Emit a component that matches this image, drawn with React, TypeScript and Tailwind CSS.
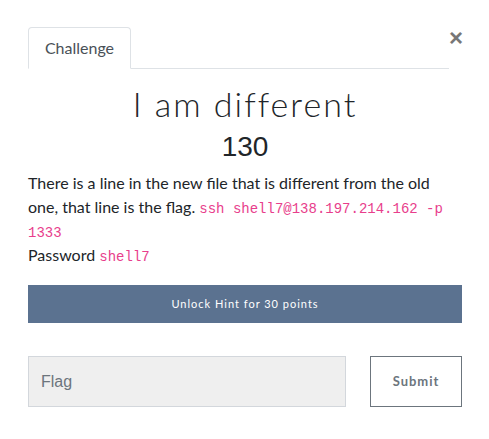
import React from "react";

const App: React.FC = () => {
    return (
        <div className="w-[489px] h-[439px] bg-white font-['Lato','Noto_Sans',sans-serif] text-[#212529]">
            <div className="pl-[28px] pr-[27px] pt-[27px]">
                {/* header: tab + close */}
                <div className="flex items-start">
                    <div className="flex-1 flex border-b border-[#dee2e6]">
                        <div className="-mb-px h-[42px] w-[103px] flex items-center justify-center bg-white border border-[#dee2e6] border-b-white rounded-t-[4px] text-[16px] text-[#495057]">
                            Challenge
                        </div>
                    </div>
                    <button className="w-[14px] -mr-[1px] -mt-[1px] text-[24px] leading-[24px] font-bold text-[#777] font-['Liberation_Sans',sans-serif]">
                        ×
                    </button>
                </div>

                {/* title */}
                <h2 className="mt-[15px] text-center font-['Lato',sans-serif] font-light text-[34px] leading-[40px] tracking-[2px] text-[#212529]">
                    I am different
                </h2>
                <h3 className="mt-[6px] text-center font-['Liberation_Sans',sans-serif] text-[28px] leading-[34px] text-[#212529]">
                    130
                </h3>

                {/* description */}
                <p className="mt-[7px] text-[16px] leading-[24px] text-[#212529]">
                    <span>There is a line in the new file that is different from the old</span>
                    <br />
                    <span>one, that line is the flag.</span>{" "}
                    <code className="font-['Liberation_Mono',monospace] text-[14px] leading-none text-[#e83e8c]">ssh shell7@138.197.214.162 -p</code>
                    <br />
                    <code className="font-['Liberation_Mono',monospace] text-[14px] leading-none text-[#e83e8c]">1333</code>
                    <br />
                    Password{" "}
                    <code className="font-['Liberation_Mono',monospace] text-[14px] leading-none text-[#e83e8c]">shell7</code>
                </p>

                {/* hint */}
                <button className="mt-[18px] w-full h-[38px] bg-[#5b7290] text-white text-[11px] tracking-[1px]">
                    Unlock Hint for 30 points
                </button>

                {/* flag form */}
                <div className="mt-[33px] flex gap-[24px]">
                    <input
                        className="flex-1 h-[51px] bg-[#efefef] border border-[#d3d7dc] px-[12px] text-[16px] font-['Liberation_Sans',sans-serif] placeholder:text-[#6c757d] outline-none"
                        placeholder="Flag"
                    />
                    <button className="w-[92px] h-[51px] border border-[#6c757d] bg-white text-[13px] font-bold tracking-[1px] text-[#6c757d]">
                        Submit
                    </button>
                </div>
            </div>
        </div>
    );
};

export default App;
